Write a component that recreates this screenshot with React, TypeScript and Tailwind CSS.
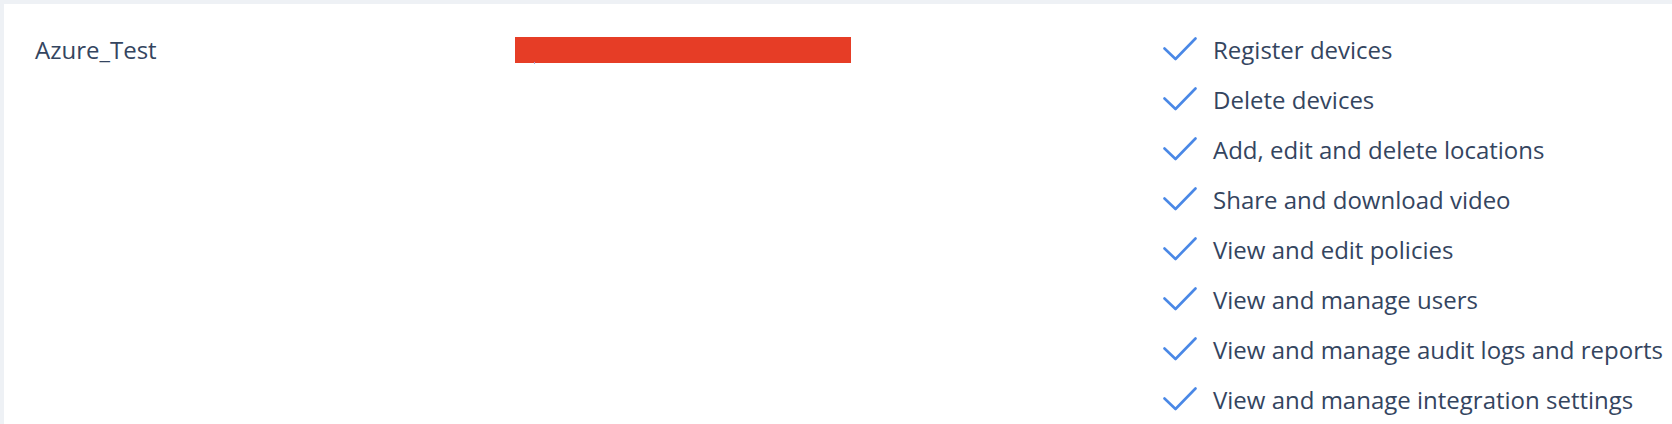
import React from "react";

const perms = [
  "Register devices",
  "Delete devices",
  "Add, edit and delete locations",
  "Share and download video",
  "View and edit policies",
  "View and manage users",
  "View and manage audit logs and reports",
  "View and manage integration settings",
];

function Check() {
  return (
    <svg width="34" height="24" viewBox="0 0 34 24" fill="none" className="-mt-[2px]">
      <path d="M1.5 11.5 L12.5 22 L32.5 1.5" stroke="#4a88e6" strokeWidth="2.6" strokeLinecap="round" strokeLinejoin="round" />
    </svg>
  );
}

export default function App() {
  return (
    <div className="w-[1672px] h-[424px] bg-[#eef1f5] pt-[4px] pl-[4px] overflow-hidden" style={{ fontFamily: '"Open Sans", sans-serif' }}>
      <div className="bg-white h-full pl-[31px] pt-[21px] grid grid-cols-[480px_648px_1fr] items-start text-[24px] text-[#34455f]">
        <div className="h-[50px] flex items-center">Azure_Test</div>
        <div className="h-[50px] flex items-center">
          <div className="relative w-[336px] h-[26px] bg-[#e63d26]">
            <div className="absolute left-[19px] top-[25px] w-[1px] h-[2px] bg-[#a9a4d6]" />
          </div>
        </div>
        <div className="flex flex-col">
          {perms.map((p) => (
            <div key={p} className="h-[50px] flex items-center gap-[16px]">
              <Check />
              <span>{p}</span>
            </div>
          ))}
        </div>
      </div>
    </div>
  );
}
